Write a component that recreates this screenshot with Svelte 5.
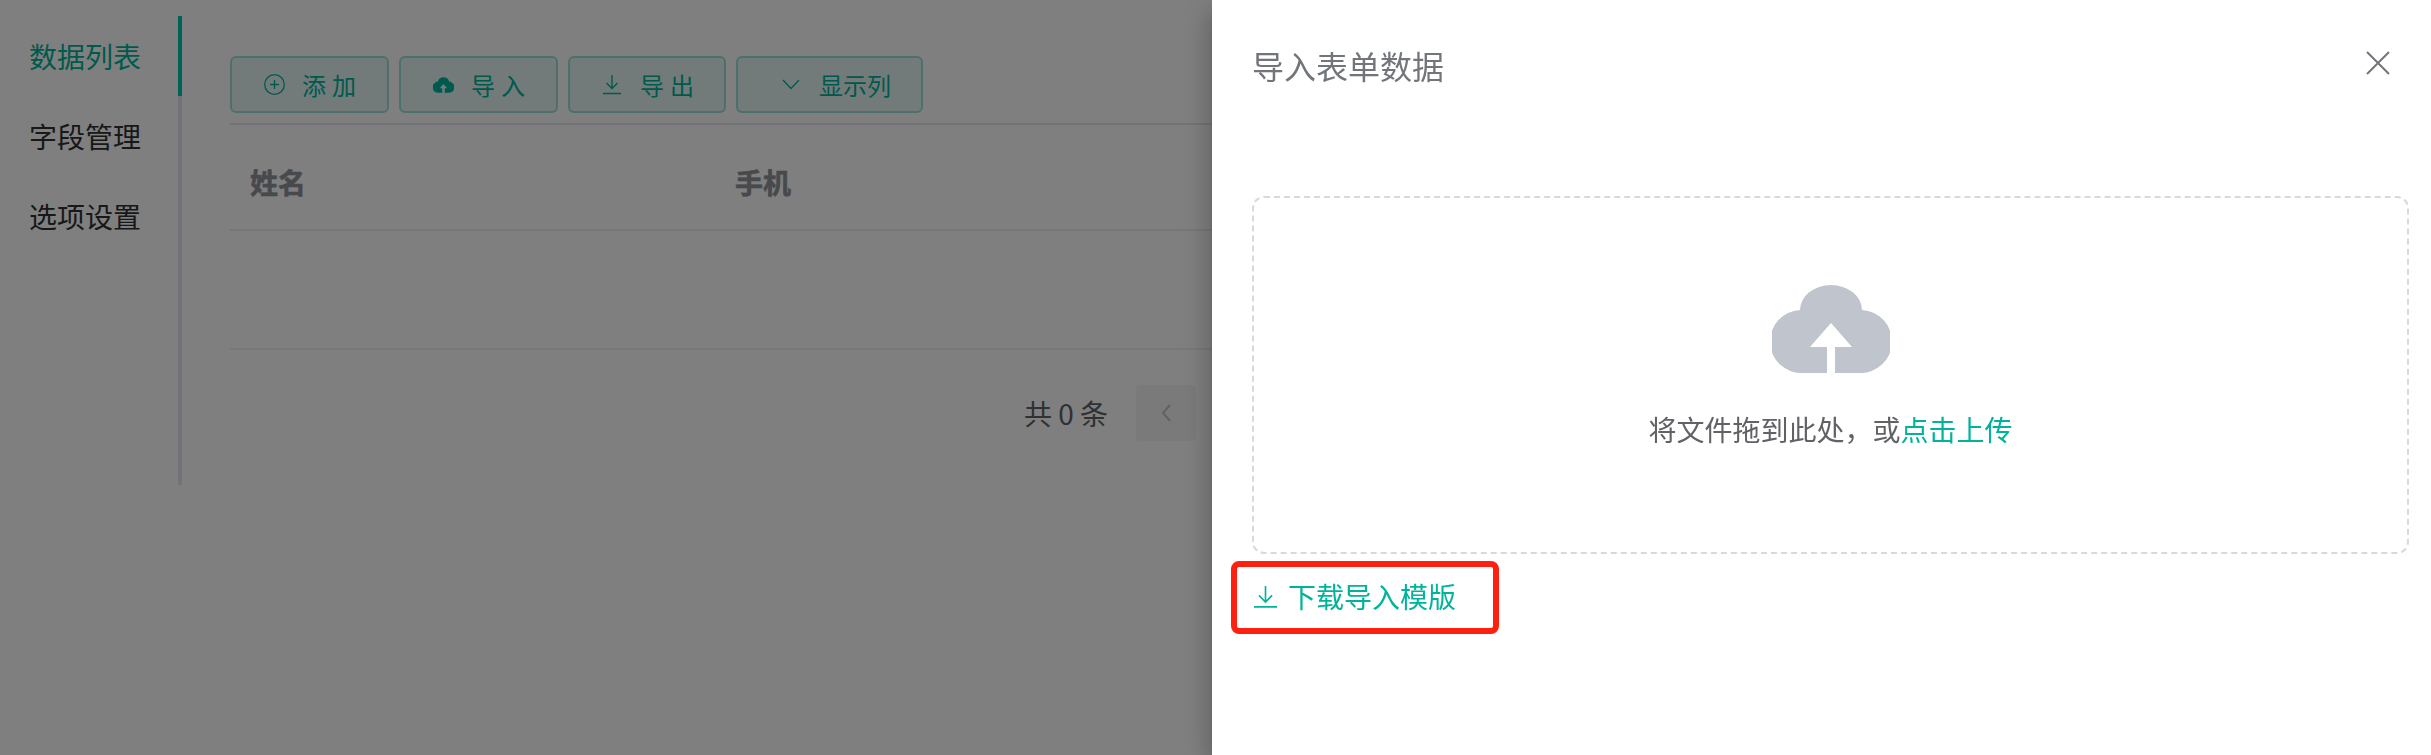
<script>
  const menu = ['数据列表', '字段管理', '选项设置'];
</script>

<div class="page">
  <aside class="side">
    {#each menu as m, i}
      <div class="item" class:active={i === 0}>{m}</div>
    {/each}
  </aside>

  <main class="main">
    <div class="toolbar">
      <button class="btn b1">
        <svg width="21" height="21" viewBox="0 0 21 21" fill="none" stroke="currentColor" stroke-width="1.3"><circle cx="10.5" cy="10.5" r="9.8"/><path d="M10.5 6v9M6 10.5h9"/></svg>
        <span class="spaced">添加</span>
      </button>
      <button class="btn b2">
        <svg width="21" height="16" viewBox="0 0 118 88"><path fill="currentColor" d="M31 88A31 31 0 0 1 28 25A31 25 0 0 1 90 25A31 31 0 0 1 87 88H66V62H80L59 38L38 62H52V88Z"/></svg>
        <span class="spaced">导入</span>
      </button>
      <button class="btn b3">
        <svg width="20" height="21" viewBox="0 0 20 21" fill="none" stroke="currentColor" stroke-width="1.4"><path d="M10 1v13M4.500 9l5.500 5.500 5.500-5.500M1 19.500h18"/></svg>
        <span class="spaced">导出</span>
      </button>
      <button class="btn b4">
        <svg width="18" height="11" viewBox="0 0 18 11" fill="none" stroke="currentColor" stroke-width="1.300"><path d="M1 1l8 8.500L17 1"/></svg>
        <span>显示列</span>
      </button>
    </div>

    <div class="thead">
      <div class="th c1">姓名</div>
      <div class="th">手机</div>
    </div>
    <div class="tbody"></div>

    <div class="pager">
      <span class="total">共 0 条</span>
      <span class="prev">
        <svg width="12" height="20" viewBox="0 0 12 20" fill="none" stroke="currentColor" stroke-width="2"><path d="M10 2L3 10l7 8"/></svg>
      </span>
    </div>
  </main>
</div>

<div class="overlay"></div>

<section class="drawer">
  <header class="dhead">
    <h2>导入表单数据</h2>
    <svg class="close" width="24" height="24" viewBox="0 0 24 24" fill="none" stroke="currentColor" stroke-width="2"><path d="M1 1l22 22M23 1L1 23"/></svg>
  </header>

  <div class="drop">
    <svg width="118" height="88" viewBox="0 0 118 88"><path fill="#c0c4cc" d="M31 88A31 31 0 0 1 28 25A31 25 0 0 1 90 25A31 31 0 0 1 87 88H63V62H80L59 38L38 62H55V88Z"/></svg>
    <p class="hint">将文件拖到此处，或<em>点击上传</em></p>
  </div>

  <div class="mark">
    <a class="tpl" href="#top">
      <svg width="23" height="23" viewBox="0 0 21 21" fill="none" stroke="currentColor" stroke-width="1.500"><path d="M10.500 1v14M4.500 9.500l6 6 6-6M0 20h21"/></svg>
      <span>下载导入模版</span>
    </a>
  </div>
</section>

<style>
  :global(body) {
    margin: 0;
    overflow: hidden;
    background: #fff;
    font-family: "Noto Sans CJK SC", "Liberation Sans", sans-serif;
  }

  .page {
    display: flex;
    width: 2431px;
    height: 755px;
    box-sizing: border-box;
    padding-top: 16px;
    overflow: hidden;
  }

  .side {
    flex: none;
    width: 182px;
    height: 469px;
    box-sizing: border-box;
    border-right: 4px solid #e4e7ed;
  }

  .item {
    position: relative;
    height: 80px;
    line-height: 80px;
    padding-left: 29px;
    font-size: 28px;
    color: #303133;
  }

  .item.active {
    color: #00b39b;
  }

  .item.active::after {
    content: '';
    position: absolute;
    top: 0;
    right: -4px;
    width: 4px;
    height: 80px;
    background: #00c4a8;
  }

  .main {
    flex: none;
    width: 2161px;
    margin-left: 48px;
    padding-top: 40px;
  }

  .toolbar {
    display: flex;
    gap: 10px;
    padding-bottom: 10px;
    border-bottom: 2px solid #e4e7ed;
  }

  .btn {
    display: flex;
    align-items: center;
    height: 57px;
    box-sizing: border-box;
    padding: 0;
    border: 2px solid #99e1d7;
    border-radius: 6px;
    background: #e6f7f5;
    color: #00b39b;
    font: inherit;
    font-size: 24px;
    line-height: 1;
  }

  .spaced {
    letter-spacing: 6px;
    margin-right: -6px;
  }

  .b1 { width: 159px; padding-left: 32px; gap: 17px; }
  .b2 { width: 159px; padding-left: 32px; gap: 17px; }
  .b3 { width: 158px; padding-left: 32px; gap: 18px; }
  .b4 { width: 187px; padding-left: 44px; gap: 19px; }

  .thead {
    display: flex;
    height: 106px;
    padding-top: 10px;
    box-sizing: border-box;
    align-items: center;
    border-bottom: 2px solid #ebeef5;
  }

  .th {
    padding-left: 20px;
    font-size: 28px;
    font-weight: 700;
    color: #909399;
    -webkit-text-stroke: 0.6px currentColor;
  }

  .c1 {
    width: 485px;
    box-sizing: border-box;
  }

  .tbody {
    height: 117px;
    border-bottom: 2px solid #ebeef5;
  }

  .pager {
    display: flex;
    align-items: center;
    padding: 35px 0 0 794px;
  }

  .total {
    width: 112px;
    font-size: 28px;
    color: #606266;
  }

  .prev {
    display: flex;
    align-items: center;
    justify-content: center;
    width: 60px;
    height: 56px;
    border-radius: 4px;
    background: #f4f4f5;
    color: #c0c4cc;
  }

  .overlay {
    position: fixed;
    inset: 0;
    background: rgba(0, 0, 0, 0.5);
  }

  .drawer {
    position: fixed;
    top: 0;
    right: 0;
    bottom: 0;
    width: 1219px;
    box-sizing: border-box;
    padding: 0 22px 0 40px;
    background: #fff;
    box-shadow: 0 8px 10px -5px rgba(0, 0, 0, 0.2), 0 16px 24px 2px rgba(0, 0, 0, 0.14), 0 6px 30px 5px rgba(0, 0, 0, 0.12);
  }

  .dhead {
    display: flex;
    align-items: center;
    justify-content: space-between;
    height: 134px;
    padding-right: 19px;
    margin-bottom: 62px;
    color: #72767b;
  }

  h2 {
    margin: -5px 0 0;
    font-size: 32px;
    font-weight: 400;
  }

  .close {
    color: #72767b;
    flex: none;
    margin-top: -8px;
  }

  .drop {
    display: flex;
    flex-direction: column;
    align-items: center;
    height: 358px;
    box-sizing: border-box;
    padding-top: 87px;
    border: 2px dashed #d9d9d9;
    border-radius: 12px;
  }

  .hint {
    margin: 36px 0 0;
    font-size: 28px;
    line-height: 40px;
    color: #606266;
  }

  .hint em {
    font-style: normal;
    color: #00b39b;
  }

  .mark {
    width: 268px;
    height: 73px;
    box-sizing: border-box;
    margin: 7px 0 0 -21px;
    padding-left: 17px;
    padding-bottom: 3px;
    display: flex;
    align-items: center;
    border: 6px solid #ff2010;
    border-radius: 8px;
  }

  .tpl {
    display: flex;
    align-items: center;
    gap: 11px;
    font-size: 28px;
    color: #00b39b;
    text-decoration: none;
  }
</style>
